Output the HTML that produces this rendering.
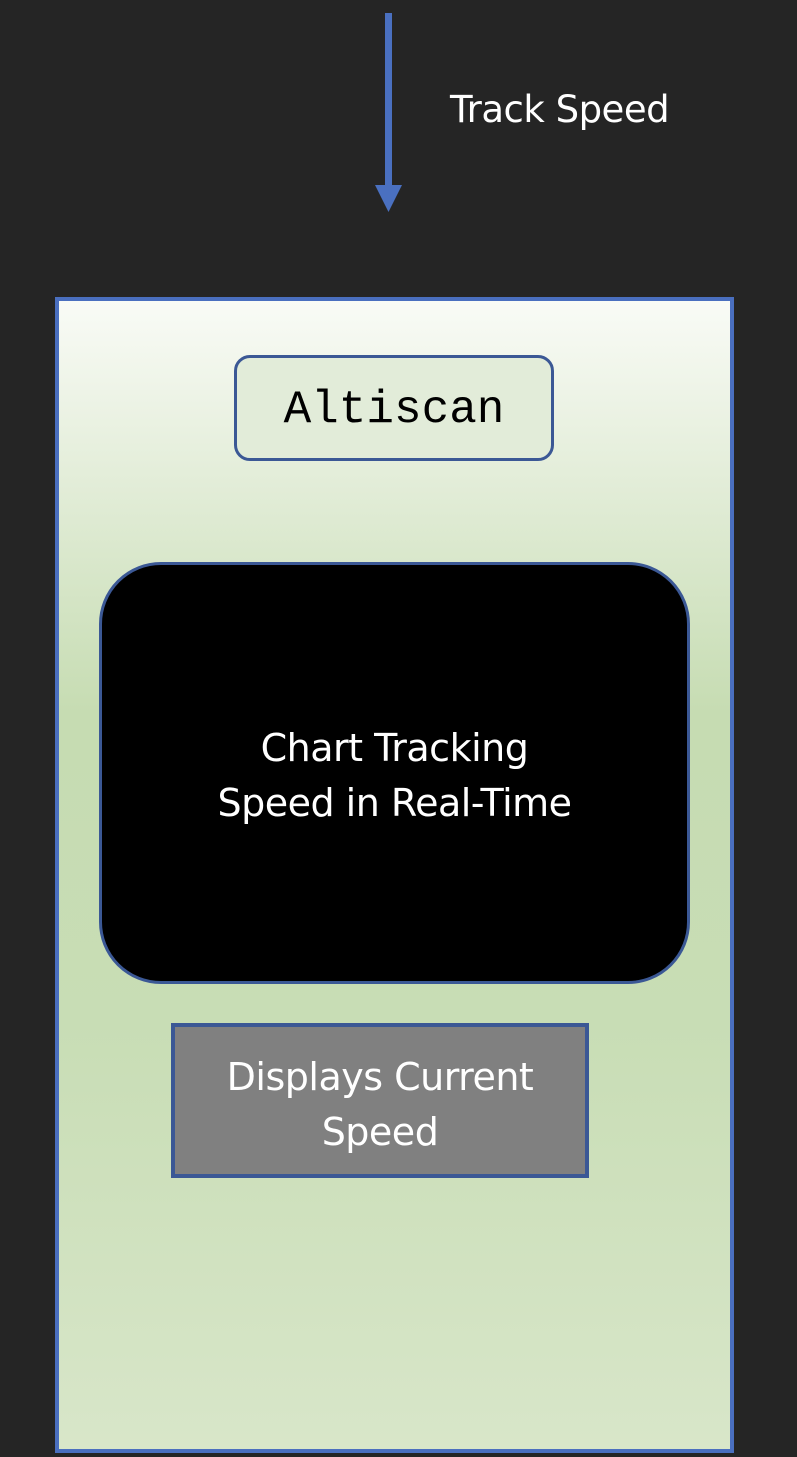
<!DOCTYPE html>
<html><head><style>
html,body{margin:0;padding:0;width:797px;height:1457px;background:#252525;overflow:hidden;font-family:"Liberation Sans",sans-serif;}
.abs{position:absolute;box-sizing:border-box;}
</style></head><body>
<svg class="abs" style="left:0;top:0" width="797" height="300">
<rect x="385" y="13" width="7" height="174" fill="#4a70c0"/>
<polygon points="375,185 402,185 388.5,212" fill="#4a70c0"/>
</svg>
<div class="abs" style="left:450px;top:88px;color:#fff;font-family:'DejaVu Sans','Liberation Sans',sans-serif;font-size:37px;line-height:44px;letter-spacing:-0.5px;white-space:nowrap;">Track Speed</div>
<div class="abs" style="left:55px;top:297px;width:679px;height:1156px;border:4px solid #4a6fbf;background:linear-gradient(#f9fbf6 0%,#e1ecd6 17%,#c6dcb2 36%,#c8ddb5 63%,#d8e6c9 100%);"></div>
<div class="abs" style="left:234px;top:355px;width:320px;height:106px;border:3px solid #3b5895;border-radius:16px;background:#e2ecd9;display:flex;align-items:center;justify-content:center;font-family:'Liberation Mono',monospace;font-size:46px;color:#000;padding-top:3px;">Altiscan</div>
<div class="abs" style="left:99px;top:562px;width:591px;height:422px;border:3px solid #3b5895;border-radius:62px;background:#000;display:flex;align-items:center;justify-content:center;text-align:center;color:#fff;font-family:'DejaVu Sans','Liberation Sans',sans-serif;font-size:38px;line-height:55px;letter-spacing:-0.5px;padding-top:6px;">Chart Tracking<br>Speed in Real-Time</div>
<div class="abs" style="left:171px;top:1023px;width:418px;height:155px;border:4px solid #3b5895;background:#808080;text-align:center;color:#fff;font-family:'DejaVu Sans','Liberation Sans',sans-serif;font-size:38px;line-height:55px;padding-top:23px;letter-spacing:-0.5px;white-space:nowrap;">Displays Current<br>Speed</div>
</body></html>
